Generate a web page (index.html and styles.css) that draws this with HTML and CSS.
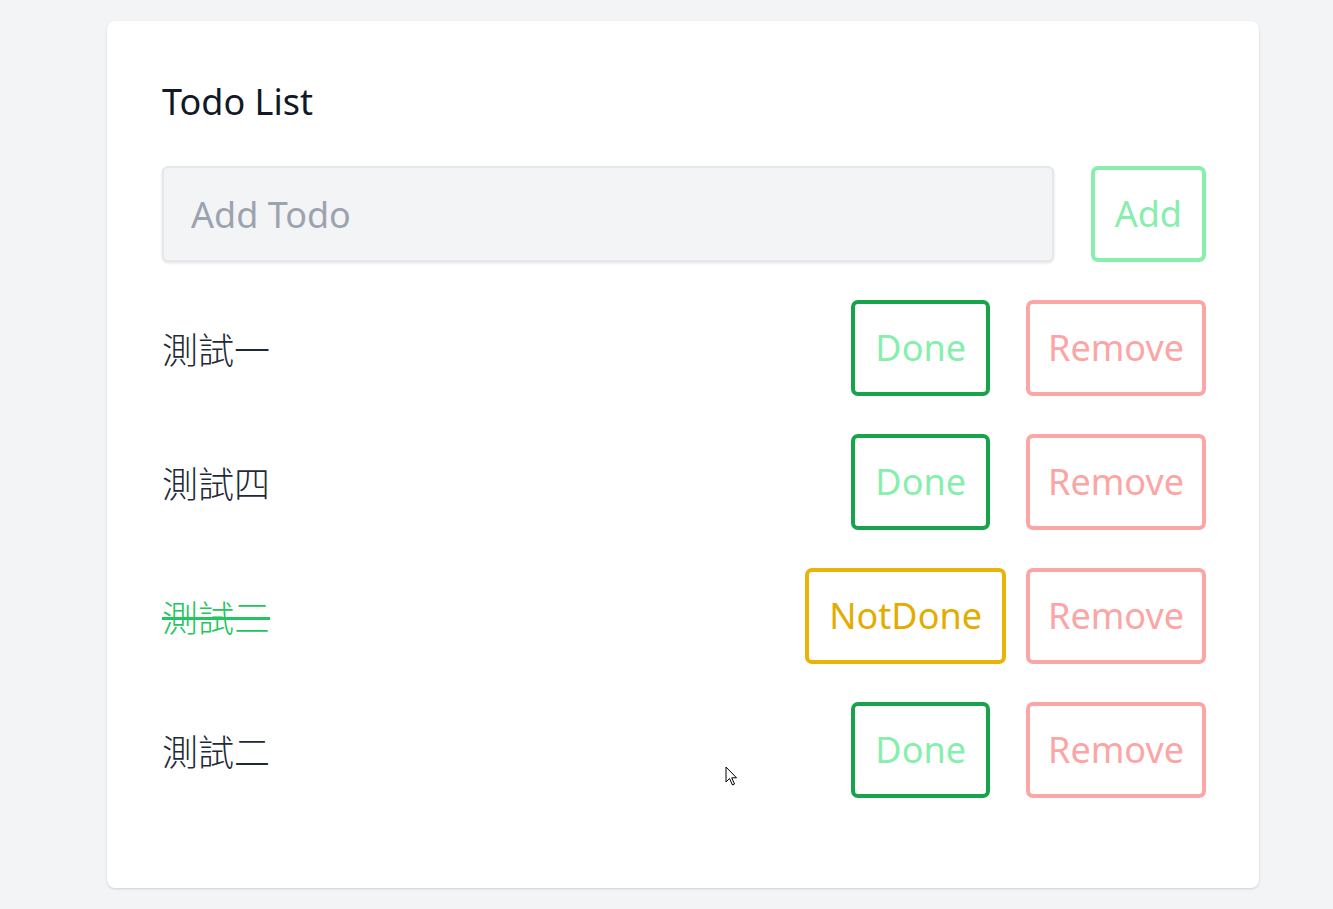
FILE: index.html
```html
<!DOCTYPE html>
<html lang="zh-Hant">
<head>
<meta charset="utf-8">
<title>Todo List</title>
<link rel="stylesheet" href="styles.css">
</head>
<body>
<main class="page">
  <section class="card">
    <h1 class="title">Todo List</h1>
    <form class="add-form">
      <input class="add-input" type="text" placeholder="Add Todo">
      <button type="button" class="btn btn-add">Add</button>
    </form>
    <ul class="todo-list">
      <li class="todo">
        <span class="todo-text">測試一</span>
        <div class="actions">
          <button type="button" class="btn btn-done">Done</button>
          <button type="button" class="btn btn-remove">Remove</button>
        </div>
      </li>
      <li class="todo">
        <span class="todo-text">測試四</span>
        <div class="actions">
          <button type="button" class="btn btn-done">Done</button>
          <button type="button" class="btn btn-remove">Remove</button>
        </div>
      </li>
      <li class="todo">
        <span class="todo-text is-done">測試三</span>
        <div class="actions">
          <button type="button" class="btn btn-notdone">NotDone</button>
          <button type="button" class="btn btn-remove">Remove</button>
        </div>
      </li>
      <li class="todo">
        <span class="todo-text">測試二</span>
        <div class="actions">
          <button type="button" class="btn btn-done">Done</button>
          <button type="button" class="btn btn-remove">Remove</button>
        </div>
      </li>
    </ul>
  </section>
  <svg class="cursor" width="14" height="22" viewBox="0 0 14 22" aria-hidden="true">
    <path d="M1 1 L1 16 L4.5 12.5 L7.5 19 L9.5 18 L6.7 11.8 L11.5 11.8 Z" fill="#fff" stroke="#000" stroke-width="1" stroke-linejoin="round"/>
  </svg>
</main>
</body>
</html>
```

FILE: styles.css
```css
* { box-sizing: border-box; }

html, body {
  margin: 0;
  padding: 0;
  background: #f3f4f6;
}

body {
  font-family: "Noto Sans", "Noto Sans CJK TC", sans-serif;
  font-size: 36px;
  line-height: 54px;
  color: #1f2937;
}

.page {
  position: relative;
  padding: 21px 0 21px 107px;
  min-height: 909px;
}

.card {
  width: 1152px;
  background: #ffffff;
  border-radius: 8px;
  box-shadow: 0 1px 3px rgba(0, 0, 0, 0.10), 0 1px 2px rgba(0, 0, 0, 0.06);
  padding: 54px 53px 90px 55px;
}

.title {
  margin: 0 0 37px;
  font-size: 36px;
  line-height: 54px;
  font-weight: 400;
  color: #111827;
}

.add-form {
  display: flex;
  gap: 37px;
  margin: 0;
}

.add-input {
  flex: 1;
  height: 96px;
  border: 2px solid #e5e7eb;
  border-radius: 6px;
  background: #f3f4f6;
  box-shadow: 0 1px 3px rgba(0, 0, 0, 0.12);
  padding: 0 27px;
  font-family: inherit;
  font-size: 36px;
  color: #1f2937;
  outline: none;
}

.add-input::placeholder {
  color: #9ca3af;
}

.btn {
  height: 96px;
  padding: 0 20px;
  border: 4px solid;
  border-radius: 7px;
  background: #ffffff;
  font-family: inherit;
  font-size: 36px;
  line-height: 54px;
  cursor: pointer;
}

.btn-add {
  border-color: #86efac;
  color: #86efac;
}

.btn-done {
  border-color: #16a34a;
  color: #86efac;
  margin-right: 36px;
}

.btn-notdone {
  border-color: #eab308;
  color: #e5ac00;
  margin-right: 20px;
}

.btn-remove {
  border-color: #fca5a5;
  color: #fca5a5;
  padding: 0 18px;
}

.todo-list {
  list-style: none;
  margin: 38px 0 0;
  padding: 0;
  display: flex;
  flex-direction: column;
  gap: 38px;
}

.todo {
  display: flex;
  align-items: center;
  justify-content: space-between;
}

.todo-text {
  font-family: "Noto Sans CJK TC", "Noto Sans", sans-serif;
  font-size: 36px;
  font-weight: 300;
  color: #1f2937;
}

.todo-text.is-done {
  color: #22c55e;
  text-decoration: line-through;
  text-decoration-thickness: 3px;
}

.actions {
  display: flex;
  align-items: center;
}

.cursor {
  position: absolute;
  left: 725px;
  top: 766px;
}
```
